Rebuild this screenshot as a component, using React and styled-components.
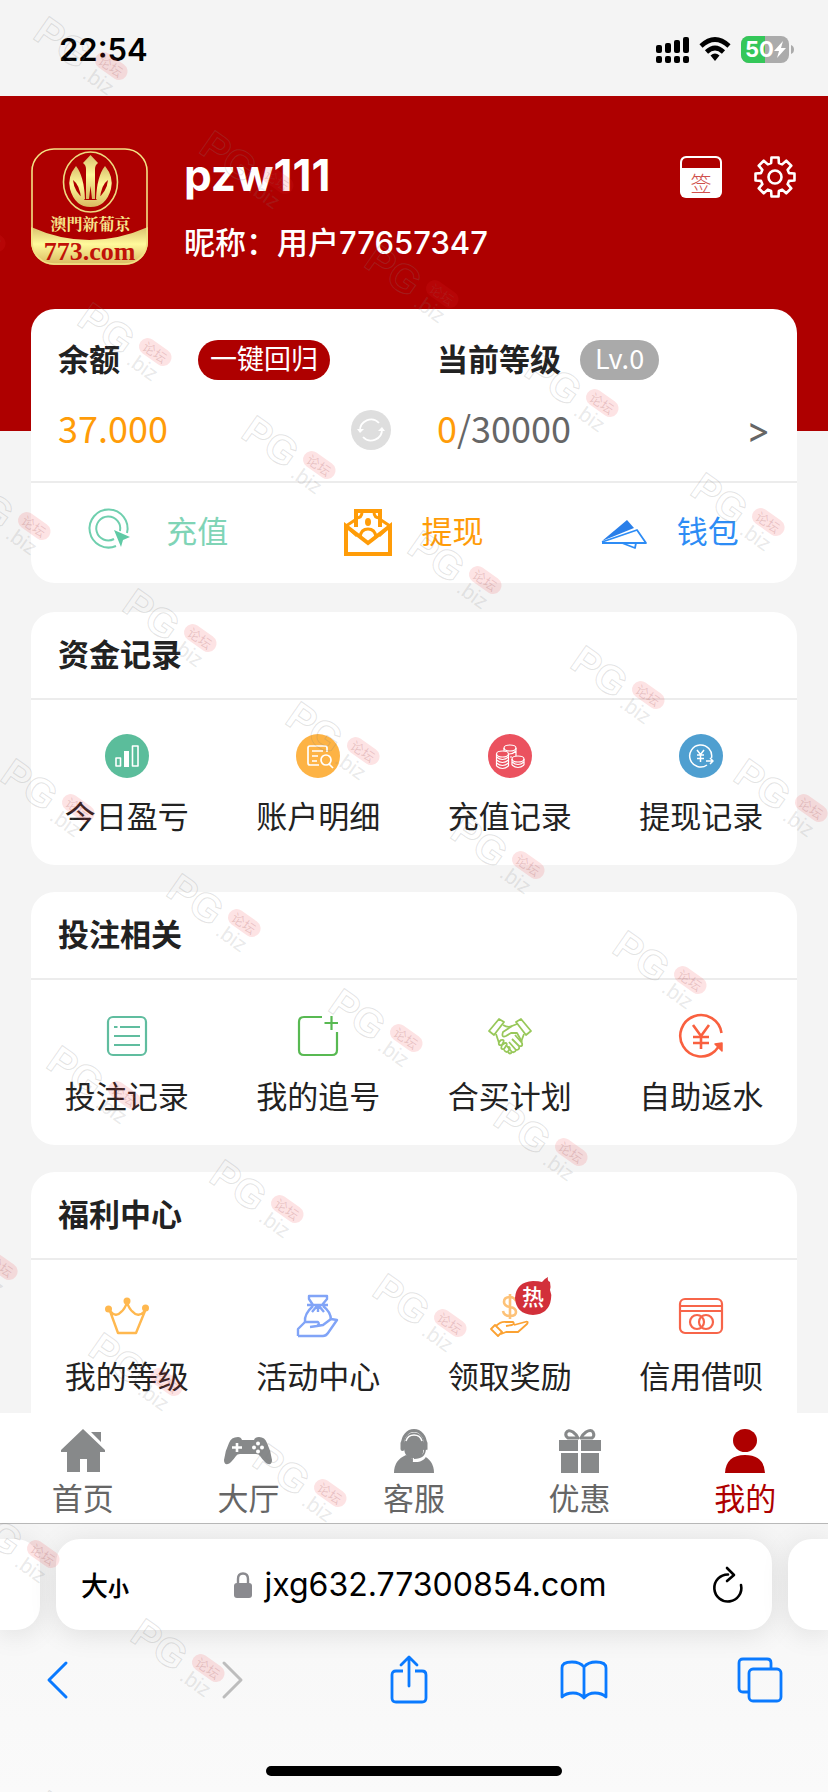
import React from 'react'
import styled, { createGlobalStyle } from 'styled-components'

const sans = `"Noto Sans CJK SC", "Noto Sans", sans-serif`
const latin = `Inter, "Noto Sans CJK SC", sans-serif`

const GlobalStyle = createGlobalStyle`
  * {
    box-sizing: border-box;
  }
  body {
    margin: 0;
    background: #f4f4f4;
    font-family: ${sans};
    color: #222;
  }
  button {
    border: 0;
    padding: 0;
    background: none;
    font: inherit;
    color: inherit;
    cursor: pointer;
  }
  h1, h2, p {
    margin: 0;
  }
  a {
    color: inherit;
    text-decoration: none;
  }
  svg {
    display: block;
    overflow: visible;
  }
`

/* ---------- icons ---------- */

const Icon = ({ w = 44, h = 44, color = 'currentColor', sw = 2, children }) => (
  <svg width={w} height={h} viewBox={`0 0 ${w} ${h}`} fill="none" stroke={color} strokeWidth={sw}
    strokeLinejoin="round" aria-hidden="true">
    {children}
  </svg>
)

const Logo = () => (
  <svg width="117" height="117" viewBox="0 0 117 117" role="img" aria-label="773.com">
    <defs>
      <linearGradient id="gold" x1="0" y1="0" x2="0" y2="1">
        <stop offset="0" stopColor="#d9bf6c" />
        <stop offset="0.45" stopColor="#fffa9c" />
        <stop offset="1" stopColor="#d8b860" />
      </linearGradient>
      <clipPath id="tile"><rect width="117" height="117" rx="23" /></clipPath>
    </defs>
    <g clipPath="url(#tile)">
      <rect width="117" height="117" fill="#ae0000" />
      <path d="M0 79 Q58 105 117 79 V117 H0Z" fill="url(#gold)" />
    </g>
    <rect x="1" y="1" width="115" height="115" rx="22" fill="none" stroke="#f3e184" strokeWidth="1.6" />
    <ellipse cx="59.500" cy="34" rx="27" ry="30" fill="none" stroke="#eedb80" strokeWidth="1.6" />
    <path d="M59.500 7 L67 15 Q64 17 64 21 V51 H61 L59.500 38 L58 51 H55 V21 Q55 17 52 15Z" fill="url(#gold)" />
    <path d="M45 18 Q53 28 54 51 H50 Q49 37 42 32 Q43 44 54 52 H65 Q76 44 77 32 Q70 37 69 51 H65 Q66 28 74 18 Q83 29 80 41 Q75 59 59.500 59 Q44 59 39 41 Q36 29 45 18Z" fill="url(#gold)" />
    <text x="59.500" y="82" textAnchor="middle" fontFamily='"Noto Serif CJK TC", "Noto Sans CJK TC", serif' fontWeight="700" fontSize="16" fill="#f7e68c">澳門新葡京</text>
    <text x="58.500" y="112" textAnchor="middle" fontFamily='"Liberation Serif", serif' fontWeight="700" fontSize="26" fill="#c11208">773.com</text>
  </svg>
)

const SignalIcon = () => (
  <svg width="33" height="28" viewBox="0 0 33 28" aria-hidden="true">
    <rect x="0" y="9" width="6" height="8" rx="2" />
    <rect x="9" y="7" width="6" height="10" rx="2" />
    <rect x="18" y="4" width="6" height="13" rx="2" />
    <rect x="27" y="1" width="6" height="16" rx="2" />
    {[0, 9, 18, 27].map(x => <rect key={x} x={x} y="20" width="6" height="7" rx="2" />)}
  </svg>
)

const WifiIcon = () => (
  <svg width="32" height="26" viewBox="0 0 32 26" fill="none" stroke="#000" strokeWidth="4.600" aria-hidden="true">
    <path d="M2 9 Q16 -4 30 9" />
    <path d="M7.500 15 Q16 7 24.500 15" />
    <path d="M11.500 18.500 Q16 14.500 20.500 18.500 L16 24Z" fill="#000" stroke="none" />
  </svg>
)

const BatteryIcon = () => (
  <svg width="53" height="27" viewBox="0 0 53 27" role="img" aria-label="50%">
    <rect width="48" height="27" rx="8" fill="#ababab" />
    <path d="M24 0 H8 A8 8 0 0 0 0 8 V19 A8 8 0 0 0 8 27 H24Z" fill="#34c759" />
    <path d="M50 9 Q53 10 53 13.500 Q53 17 50 18Z" fill="#ababab" />
    <text x="4" y="21" fontFamily="Inter, sans-serif" fontWeight="700" fontSize="22" fill="#fff">50</text>
    <path d="M42 5 L33 15 H38 L36 22 L45 12 H40Z" fill="#fff" />
  </svg>
)

const CheckInIcon = () => (
  <svg width="42" height="42" viewBox="0 0 42 42" aria-hidden="true">
    <rect width="42" height="42" rx="6" fill="#fff" />
    <path d="M2 12 V7 Q2 2 7 2 H35 Q40 2 40 7 V12Z" fill="#ae0000" />
    <text x="21" y="35" textAnchor="middle" fontFamily='"Noto Sans CJK SC", sans-serif' fontWeight="300" fontSize="21" fill="#d0504c">签</text>
  </svg>
)

// eight teeth, drawn clockwise from the top
const gearPath = () => {
  const pts = []
  for (let i = 0; i < 8; i++) {
    const a = (i * Math.PI) / 4
    const at = (r, d) => `${(21 + r * Math.sin(a + d)).toFixed(2)} ${(21 - r * Math.cos(a + d)).toFixed(2)}`
    pts.push(at(14.5, -0.27), at(19.8, -0.18), at(19.8, 0.18), at(14.5, 0.27))
  }
  return `M${pts.join('L')}Z`
}

const GearIcon = () => (
  <Icon w={42} h={42} color="#fff" sw={2.6}>
    <path d={gearPath()} />
    <circle cx="21" cy="21" r="6.500" />
  </Icon>
)

const RefreshIcon = () => (
  <Icon w={40} h={40} color="#fff" sw={1.8}>
    <circle cx="20" cy="20" r="20" fill="#dedede" stroke="none" />
    <path d="M9 21 A11 11 0 0 1 28 13 M31 19 A11 11 0 0 1 12 27" />
    <path d="M6 19 L9 23 L13 19Z M27 21 L31 17 L34 21Z" fill="#fff" stroke="none" />
  </Icon>
)

const DepositIcon = () => (
  <Icon w={48} h={52} color="#6fcfae" sw={2}>
    <path d="M27 39 A19 19 0 1 1 38 26" />
    <path d="M25 32 A12 12 0 1 1 31 24" />
    <path d="M25 23 L41 30 L34 33 L32 40Z" fill="#5fcaa5" stroke="none" />
  </Icon>
)

const WithdrawIcon = () => (
  <Icon w={48} h={48} color="#ff9c08" sw={4}>
    <path d="M2 17 V45 H46 V17 L24 34Z" strokeLinejoin="miter" />
    <path d="M12 18 V2 H36 V18" strokeLinejoin="miter" />
    <path d="M11 11 L2 17 L13 27 M37 11 L46 17 L35 27" strokeWidth="3" />
    <path d="M12 9 Q18 9 18 3 M36 9 Q30 9 30 3 M16 28 Q17 20 24 20 Q31 20 32 28" strokeWidth="3" />
    <ellipse cx="24" cy="13" rx="3" ry="4" fill="#ff9c08" stroke="none" />
  </Icon>
)

const WalletIcon = () => (
  <Icon w={48} h={44} color="#2d8cf5" sw={1.8}>
    <path d="M2 30 L27 9 L34 17Z" fill="#2a7fe9" stroke="none" />
    <path d="M2 31 L37 19 L46 32 H2" />
    <path d="M22 32 L35 37 L36 32" />
  </Icon>
)

const ChartIcon = () => (
  <Icon color="#fff" sw={1.6}>
    <circle cx="22" cy="22" r="22" fill="#5bbd9b" stroke="none" />
    <path d="M11 24 H15.500 V32 H11Z M27.500 12 H33 V32 H27.500Z" />
    <path d="M19 17 H24 V33 H19Z" fill="#fff" stroke="none" />
  </Icon>
)

const DetailIcon = () => (
  <Icon color="#fff" sw={1.7}>
    <circle cx="22" cy="22" r="22" fill="#fdb345" stroke="none" />
    <path d="M31 18 V14 Q31 12 29 12 H14 Q12 12 12 14 V29 Q12 31 14 31 H23 M16 17 H27 M16 22 H22 M16 27 H21" />
    <circle cx="30" cy="26" r="5" />
    <path d="M33 30 L37 34" />
  </Icon>
)

const CoinStack = ({ x, y, n }) => (
  <g>
    <ellipse cx={x} cy={y} rx="6" ry="3" />
    <path d={`M${x - 6} ${y} V${y + n * 3} M${x + 6} ${y} V${y + n * 3}`} />
    {Array.from({ length: n }, (_, i) => (
      <path key={i} d={`M${x - 6} ${y + 3 * (i + 1)} Q${x} ${y + 3 * (i + 1) + 5} ${x + 6} ${y + 3 * (i + 1)}`} />
    ))}
  </g>
)

const CoinsIcon = () => (
  <Icon color="#fff" sw={1.2}>
    <circle cx="22" cy="22" r="22" fill="#eb525f" stroke="none" />
    <ellipse cx="22" cy="14" rx="6" ry="3" />
    <path d="M16 14 V17 M28 14 V22 M21 20 Q25 20 28 17 M22 23 H24" />
    <CoinStack x={14.5} y={20} n={4} />
    <CoinStack x={30} y={25} n={2} />
  </Icon>
)

const YenOutIcon = () => (
  <Icon color="#fff" sw={1.5}>
    <circle cx="22" cy="22" r="22" fill="#4f9fd0" stroke="none" />
    <path d="M32.500 24 A11 11 0 1 0 28 31" />
    <path d="M18 16 L21.500 20.500 L25 16 M21.500 20.500 V28 M18 21 H25 M18 24.500 H25 M27 27 H34 M31 24 L34 27 L31 30" />
  </Icon>
)

const ListIcon = () => (
  <Icon color="#60bd9f" sw={2.2}>
    <rect x="3" y="3" width="38" height="38" rx="5" />
    <path d="M9 13 H12.500 M15 13 H35 M9 22 H35 M9 31 H35" />
  </Icon>
)

const AddIcon = () => (
  <Icon color="#58b952" sw={2.2}>
    <path d="M26 3 H8 Q3 3 3 8 V36 Q3 41 8 41 H36 Q41 41 41 36 V18" />
    <path d="M28.500 9 H42 M35.500 2 V16" />
  </Icon>
)

const HandshakeIcon = () => (
  <Icon color="#98c85a" sw={1.8}>
    <path d="M1 17 L11 5 L16 8 L6 21Z M43 17 L33 5 L28 8 L38 21Z" />
    <path d="M15 11 Q20 14 24 12 L29 10 M8 20 L11 29 M36 20 L33 28" />
    <path d="M24 12 L15 18 Q13 24 18 22 L23 19 H29 L34 28" />
    <path d="M27 21 L34 29 Q35 33 31 32 L24 25 M31 32 Q32 36 28 36 L21 28 M28 36 Q27 39 24 38 L18 31 M24 38 Q22 41 20 38" />
    <path d="M13 26 Q17 25 15 29 L14 31 Q10 32 11 28Z M17 29 Q20 29 18 32 L16 35 Q12 36 14 31Z M20 33 Q23 33 21 36 Q19 40 16 36" />
  </Icon>
)

const YenBackIcon = () => (
  <Icon color="#f9603f" sw={2.6}>
    <path d="M42.500 19 A20.700 20.700 0 1 0 36 37 L41 31" />
    <path d="M36 30 L43 29 V37Z" fill="#f9603f" strokeWidth="1.500" />
    <path d="M14 11 L22 22 L30 11 M22 22 V35 M14 23 H30 M14 29 H30" />
  </Icon>
)

const CrownIcon = () => (
  <Icon color="#ffb84f" sw={2.4}>
    <path d="M5 17 L13 39 H31 L40 17 Q33 24 28 18 Q24 15 22 8 Q20 15 16 18 Q11 24 5 17Z" />
    <g fill="#ffb84f" stroke="none">
      <circle cx="22" cy="7" r="3.500" />
      <circle cx="3.500" cy="15" r="3.500" />
      <circle cx="40.500" cy="14" r="3.500" />
    </g>
  </Icon>
)

const BagIcon = () => (
  <Icon color="#81a4f7" sw={2.4}>
    <path d="M17 11 L13 5 V2 H31 V5 L26 11 M11 11 H32 M17 12 Q8 20 9 28 M27 12 Q35 18 35 26 M21 12 L16 18 M22 12 V18 M23 12 L28 18" />
    <path d="M2 42 V35 L9 28 H22 Q24 30 21 32 L14 33 M21 32 L27 31 L35 25 L41 26 L32 39 Q30 42 27 42 H2" />
  </Icon>
)

const RewardIcon = () => (
  <Icon color="#fba233" sw={1.8}>
    <path d="M28 7 Q26 3 22 3 Q16 3 16 8 Q16 12 22 13 Q28 14 28 18 Q28 22 22 22 Q16 22 15 17 M22 0 V25" stroke="#fdc278" strokeWidth="2.600" />
    <path d="M3 35 L7 31 L14 38 L10 42Z M8 32 Q13 27 18 28 H25 Q27 30 24 31 L18 32 M26 31 L37 28 Q41 27 39 30 L30 38 H18 L13 40" />
  </Icon>
)

const CreditIcon = () => (
  <Icon color="#f7654a" sw={2.2}>
    <rect x="1" y="5" width="42" height="34" rx="5" />
    <path d="M1 12 H43 M1 17 H43" />
    <circle cx="18" cy="28" r="7" />
    <circle cx="27" cy="28" r="7" />
  </Icon>
)

const HomeIcon = () => (
  <Icon w={48} color="none">
    <path d="M24 0 L46 21 V23 H41 V43 H28 V30 H21 V43 H8 V23 H2 V21Z M32 3 H42 V13Z" fill="currentColor" />
  </Icon>
)

const GameIcon = () => (
  <Icon w={48} color="none">
    <path d="M14 8 Q17 8 18 11 H30 Q31 8 35 8 Q41 8 43 14 Q47 22 48 31 Q48 36 44 35 Q41 34 36 27 Q35 25 32 25 H16 Q13 25 12 27 Q7 34 4 35 Q0 36 0 31 Q1 22 5 14 Q7 8 14 8Z" fill="currentColor" />
    <path d="M13 14 V23 M8 18.500 H18" stroke="#fff" strokeWidth="2.600" />
    <g fill="#fff">
      <circle cx="34" cy="14.500" r="2" /><circle cx="34" cy="22.500" r="2" />
      <circle cx="30" cy="18.500" r="2" /><circle cx="38" cy="18.500" r="2" />
    </g>
  </Icon>
)

const ServiceIcon = () => (
  <Icon w={48} color="none">
    <path d="M4 44 Q4 31 16 26 L24 31 L32 26 Q44 31 44 44Z" fill="currentColor" />
    <path d="M14 20 V14 A10 10.500 0 0 1 34 14 V20 Q33 30 24 30 Q15 30 14 20Z" fill="currentColor" />
    <path d="M12.500 15 A11.500 13.500 0 0 1 35.500 15" stroke="currentColor" strokeWidth="3" />
    <path d="M16 12 A8.500 9 0 0 1 32 12" stroke="#fff" strokeWidth="1.500" />
    <rect x="10.500" y="12" width="4" height="10" rx="2" fill="currentColor" />
    <rect x="33.500" y="12" width="4" height="10" rx="2" fill="currentColor" />
    <path d="M35 21 Q36 32 23 31" stroke="#fff" strokeWidth="4" />
    <path d="M35 20 Q35 29 24 29" stroke="currentColor" strokeWidth="1.800" />
  </Icon>
)

const GiftIcon = () => (
  <Icon w={48} color="none">
    <path d="M3 11 H22 V22 H3Z M25 11 H45 V22 H25Z M5 24 H22 V44 H5Z M25 24 H43 V44 H25Z" fill="currentColor" />
    <path d="M22 9 H12 Q9 7 10 4 Q12 0 17 3 Q21 6 22 9Z M25 9 H36 Q39 7 37 3 Q35 0 30 3 Q26 6 25 9Z" stroke="currentColor" strokeWidth="3" />
  </Icon>
)

const UserIcon = () => (
  <Icon w={48} color="none">
    <ellipse cx="24" cy="11.500" rx="12" ry="11.500" fill="currentColor" />
    <path d="M4 44 Q5 26 24 26 Q43 26 44 44Z" fill="currentColor" />
  </Icon>
)

/* ---------- data ---------- */

const sections = [
  {
    title: '资金记录',
    items: [
      { label: '今日盈亏', icon: <ChartIcon /> },
      { label: '账户明细', icon: <DetailIcon /> },
      { label: '充值记录', icon: <CoinsIcon /> },
      { label: '提现记录', icon: <YenOutIcon /> },
    ],
  },
  {
    title: '投注相关',
    items: [
      { label: '投注记录', icon: <ListIcon /> },
      { label: '我的追号', icon: <AddIcon /> },
      { label: '合买计划', icon: <HandshakeIcon /> },
      { label: '自助返水', icon: <YenBackIcon /> },
    ],
  },
  {
    title: '福利中心',
    items: [
      { label: '我的等级', icon: <CrownIcon /> },
      { label: '活动中心', icon: <BagIcon /> },
      { label: '领取奖励', icon: <RewardIcon />, hot: true },
      { label: '信用借呗', icon: <CreditIcon /> },
    ],
  },
]

const tabs = [
  { label: '首页', icon: <HomeIcon /> },
  { label: '大厅', icon: <GameIcon /> },
  { label: '客服', icon: <ServiceIcon /> },
  { label: '优惠', icon: <GiftIcon /> },
  { label: '我的', icon: <UserIcon />, active: true },
]

const stamps = [
  [34, 12], [200, 126], [365, 240], [525, 349], [691, 468],
  [-88, 184], [78, 298], [242, 411], [408, 526], [571, 641], [734, 754],
  [-43, 472], [123, 584], [286, 697], [451, 811], [613, 926],
  [1, 754], [167, 869], [329, 984], [494, 1098],
  [47, 1041], [210, 1155], [373, 1269],
  [-76, 1212], [89, 1328], [253, 1439],
  [-34, 1500], [131, 1614], [34, 1786],
]

/* ---------- page ---------- */

export default function App() {
  return (
    <Page>
      <GlobalStyle />
      <StatusBar>
        <Time>22:54</Time>
        <StatusIcons>
          <SignalIcon />
          <WifiIcon />
          <BatteryIcon />
        </StatusIcons>
      </StatusBar>

      <Main>
        <Header>
          <Logo />
          <Profile>
            <UserName>pzw111</UserName>
            <Nickname>昵称：用户77657347</Nickname>
          </Profile>
          <HeaderActions>
            <button aria-label="签到"><CheckInIcon /></button>
            <button aria-label="设置"><GearIcon /></button>
          </HeaderActions>
        </Header>

        <Cards>
          <Card>
            <Summary>
              <SummaryRow $gap={78}>
                <CardTitle>余额</CardTitle>
                <RecallButton>一键回归</RecallButton>
              </SummaryRow>
              <SummaryRow $gap={19}>
                <CardTitle>当前等级</CardTitle>
                <Level>Lv.0</Level>
              </SummaryRow>
              <AmountRow>
                <Amount><b>37.000</b></Amount>
                <button aria-label="刷新"><RefreshIcon /></button>
              </AmountRow>
              <AmountRow>
                <Amount><b>0</b>/30000</Amount>
                <More aria-label="等级详情">&gt;</More>
              </AmountRow>
            </Summary>
            <Actions>
              <Action $color="#7fd4b6"><DepositIcon /><span>充值</span></Action>
              <Action $color="#ff9c08"><WithdrawIcon /><span>提现</span></Action>
              <Action $color="#2d8cf5"><WalletIcon /><span>钱包</span></Action>
            </Actions>
          </Card>

          {sections.map(section => (
            <Card key={section.title}>
              <CardHead><CardTitle>{section.title}</CardTitle></CardHead>
              <Grid>
                {section.items.map(item => (
                  <Entry key={item.label}>
                    <EntryIcon>
                      {item.icon}
                      {item.hot && <Hot />}
                    </EntryIcon>
                    {item.label}
                  </Entry>
                ))}
              </Grid>
            </Card>
          ))}
        </Cards>
      </Main>

      <TabBar>
        {tabs.map(tab => (
          <Tab key={tab.label} href="#" $active={tab.active}>
            <TabIcon $active={tab.active}>{tab.icon}</TabIcon>
            {tab.label}
          </Tab>
        ))}
      </TabBar>

      <Browser>
        <AddressRow>
          <Stub $side="left" />
          <AddressBar>
            <TextSize>大<small>小</small></TextSize>
            <Address>
              <svg width="18" height="26" viewBox="0 0 18 26" aria-hidden="true">
                <path d="M4 12 V7 Q4 1.500 9 1.500 Q14 1.500 14 7 V12" fill="none" stroke="#8a8a8f" strokeWidth="2.400" />
                <rect y="11" width="18" height="15" rx="3" fill="#8a8a8f" />
              </svg>
              jxg632.77300854.com
            </Address>
            <button aria-label="重新载入">
              <Icon w={32} h={36} color="#000" sw={2.6}>
                <path d="M16 7.500 A13.500 13.500 0 1 0 29 18" strokeLinecap="round" />
                <path d="M15 1 L22 8 L15 14" strokeLinecap="round" />
              </Icon>
            </button>
          </AddressBar>
          <Stub $side="right" />
        </AddressRow>
        <Toolbar>
          <ToolButton aria-label="后退">
            <Icon w={20} h={36} sw={3}><path d="M19 1 L2 18 L19 35" strokeLinecap="round" /></Icon>
          </ToolButton>
          <ToolButton aria-label="前进" disabled>
            <Icon w={20} h={36} sw={3}><path d="M1 1 L18 18 L1 35" strokeLinecap="round" /></Icon>
          </ToolButton>
          <ToolButton aria-label="共享">
            <Icon w={38} h={48} sw={2.8}>
              <path d="M13 15 H6 Q2 15 2 19 V42 Q2 46 6 46 H32 Q36 46 36 42 V19 Q36 15 32 15 H25" />
              <path d="M19 30 V2 M11 9 L19 1 L27 9" strokeLinecap="round" />
            </Icon>
          </ToolButton>
          <ToolButton aria-label="书签">
            <Icon w={48} h={40} sw={2.8}>
              <path d="M24 7 Q20 2 12 2 Q2 2 2 8 V37 Q6 33 13 33 Q20 33 24 38 Q28 33 35 33 Q42 33 46 37 V8 Q46 2 36 2 Q28 2 24 7Z M24 7 V37" />
            </Icon>
          </ToolButton>
          <ToolButton aria-label="标签页">
            <Icon w={46} h={44} sw={2.8}>
              <path d="M12 34 H6 Q2 34 2 30 V5 Q2 1 6 1 H30 Q34 1 34 5 V11" />
              <rect x="12" y="11" width="32" height="32" rx="4" />
            </Icon>
          </ToolButton>
        </Toolbar>
        <HomeIndicator />
      </Browser>

      <Watermarks aria-hidden="true">
        {stamps.map(([x, y]) => (
          <Stamp key={`${x},${y}`} style={{ left: x + 15, top: y }}>
            <StampName>PG</StampName>
            <StampSide>
              <StampPill>论坛</StampPill>
              .biz
            </StampSide>
          </Stamp>
        ))}
      </Watermarks>
    </Page>
  )
}

const Hot = () => (
  <HotBadge>
    <svg width="37" height="38" viewBox="0 0 37 38" role="img" aria-label="热">
      <path d="M18 4 Q24 4 27 5 Q29 2 33 0 Q32 4 35 5 Q36 10 35 13 Q37 18 36 22 Q34 37 18 38 Q1 37 0 21 Q1 5 18 4Z" fill="#d2303a" />
      <text x="18" y="28" textAnchor="middle" fontFamily='"Noto Sans CJK SC", sans-serif' fontWeight="500" fontSize="22" fill="#fff">热</text>
    </svg>
  </HotBadge>
)

const Page = styled.div`
  position: relative;
  display: flex;
  flex-direction: column;
  height: 100vh;
  overflow: hidden;
`
const StatusBar = styled.div`
  flex: none;
  display: flex;
  align-items: center;
  justify-content: space-between;
  height: 96px;
  padding: 3px 34px 0 59px;
`
const Time = styled.span`
  font-family: ${latin};
  font-size: 31px;
  font-weight: 600;
  color: #000;
`
const StatusIcons = styled.div`
  display: flex;
  align-items: center;
  gap: 10px;
`
const Main = styled.main`
  flex: 1;
  min-height: 0;
  overflow: hidden;
`
const Header = styled.header`
  display: flex;
  align-items: flex-start;
  height: 335px;
  padding: 52px 32px 0 31px;
  background: #ae0000;
  color: #fff;
`
const Profile = styled.div`
  flex: 1;
  margin-left: 36px;
`
const UserName = styled.h1`
  font-family: ${latin};
  font-size: 44px;
  font-weight: 700;
  line-height: 54px;
`
const Nickname = styled.p`
  margin-top: 19px;
  font-family: ${latin};
  font-size: 31px;
  font-weight: 500;
  line-height: 44px;
`
const HeaderActions = styled.div`
  display: flex;
  gap: 32px;
  padding-top: 8px;
`
const Cards = styled.div`
  display: flex;
  flex-direction: column;
  gap: 27px;
  margin-top: -122px;
  padding: 0 31px;
`
const Card = styled.section`
  background: #fff;
  border-radius: 24px;

  &:first-child {
    margin-bottom: 2px;
  }
  &:last-child {
    padding-bottom: 40px;
  }
`
const CardTitle = styled.h2`
  padding-bottom: 4px;
  font-size: 31px;
  font-weight: 700;
  line-height: 36px;
`
const CardHead = styled.div`
  display: flex;
  align-items: center;
  height: 88px;
  padding: 0 27px;
  border-bottom: 2px solid #ececec;
`
const Summary = styled.div`
  display: grid;
  grid-template-columns: 1fr 1fr;
  gap: 28px 46px;
  padding: 31px 27px 29px;
  border-bottom: 2px solid #ececec;
`
const SummaryRow = styled.div`
  display: flex;
  align-items: center;
  gap: ${props => props.$gap}px;
`
const RecallButton = styled.button`
  height: 40px;
  padding: 0 12px 4px;
  border-radius: 20px;
  background: #ae0000;
  color: #fff;
  font-size: 27px;
  line-height: 36px;
`
const Level = styled.span`
  height: 40px;
  padding: 0 15px;
  border-radius: 20px;
  background: #aaa;
  color: #fff;
  font-size: 27px;
  line-height: 36px;
`
const AmountRow = styled.div`
  display: flex;
  align-items: center;
  justify-content: space-between;
  height: 44px;
`
const Amount = styled.span`
  padding-bottom: 6px;
  font-size: 36px;
  line-height: 44px;
  color: #666;

  b {
    font-weight: 400;
    color: #ff9c08;
  }
`
const More = styled.button`
  font-family: ${latin};
  font-size: 36px;
  line-height: 44px;
  color: #666;
`
const Actions = styled.div`
  display: grid;
  grid-template-columns: repeat(3, 1fr);
  height: 100px;
`
const Action = styled.button`
  display: flex;
  align-items: center;
  justify-content: center;
  gap: 29px;
  font-size: 31px;
  line-height: 44px;
  color: ${props => props.$color};

  span {
    padding-bottom: 6px;
  }
`
const Grid = styled.div`
  display: grid;
  grid-template-columns: repeat(4, 1fr);
  padding: 34px 0 28px;
`
const Entry = styled.button`
  display: flex;
  flex-direction: column;
  align-items: center;
  gap: 15px;
  font-size: 31px;
  line-height: 44px;
`
const EntryIcon = styled.span`
  position: relative;
`
const HotBadge = styled.span`
  position: absolute;
  left: 27px;
  top: -17px;
`
const TabBar = styled.nav`
  flex: none;
  display: grid;
  grid-template-columns: repeat(5, 1fr);
  height: 111px;
  padding-top: 16px;
  background: #fff;
  border-bottom: 1px solid #b9b9b9;
`
const Tab = styled.a`
  display: flex;
  flex-direction: column;
  align-items: center;
  gap: 2px;
  font-size: 31px;
  line-height: 44px;
  color: ${props => (props.$active ? '#ae0000' : '#666')};
`
const TabIcon = styled.span`
  color: ${props => (props.$active ? '#ae0000' : '#87898a')};
`
const Browser = styled.footer`
  flex: none;
  background: linear-gradient(#f5f5f5, #f8f8f8 130px, #fafafa);
`
const AddressRow = styled.div`
  display: flex;
  gap: 16px;
  padding-top: 15px;
`
const Stub = styled.div`
  width: 40px;
  background: #fff;
  border-radius: ${props => (props.$side === 'left' ? '0 24px 24px 0' : '24px 0 0 24px')};
  box-shadow: 0 4px 28px rgba(0, 0, 0, 0.1);
`
const AddressBar = styled.div`
  flex: 1;
  display: flex;
  align-items: center;
  justify-content: space-between;
  height: 91px;
  padding: 0 28px 0 25px;
  background: #fff;
  border-radius: 24px;
  box-shadow: 0 4px 28px rgba(0, 0, 0, 0.1);
  color: #000;
`
const TextSize = styled.button`
  font-size: 27px;
  font-weight: 500;

  small {
    font-size: 21px;
    font-weight: 700;
  }
`
const Address = styled.button`
  display: flex;
  align-items: center;
  gap: 12px;
  font-family: ${latin};
  font-size: 32px;
`
const Toolbar = styled.div`
  display: flex;
  align-items: center;
  justify-content: space-between;
  height: 100px;
  padding: 0 43px 0 32px;
`
const ToolButton = styled.button`
  display: flex;
  justify-content: center;
  width: 50px;
  color: #0a7aff;

  &:disabled {
    color: #bdbdbd;
  }
`
const HomeIndicator = styled.div`
  width: 296px;
  height: 10px;
  margin: 36px auto 16px;
  border-radius: 5px;
  background: #000;
`
const Watermarks = styled.div`
  position: absolute;
  inset: 0;
  overflow: hidden;
  pointer-events: none;
`
const Stamp = styled.div`
  position: absolute;
  display: flex;
  gap: 6px;
  transform: rotate(35deg);
  transform-origin: 0 0;
`
const StampName = styled.span`
  font-family: "Liberation Sans", sans-serif;
  font-size: 40px;
  font-weight: 700;
  line-height: 34px;
  color: transparent;
  -webkit-text-stroke: 1px rgba(128, 128, 128, 0.22);
`
const StampSide = styled.span`
  display: flex;
  flex-direction: column;
  font-family: "Liberation Sans", sans-serif;
  font-size: 21px;
  line-height: 22px;
  color: rgba(128, 128, 128, 0.18);
`
const StampPill = styled.span`
  width: 36px;
  border-radius: 9px;
  background: rgba(240, 40, 50, 0.13);
  font-family: ${sans};
  font-size: 13px;
  line-height: 17px;
  text-align: center;
  color: rgba(160, 80, 80, 0.22);
`
